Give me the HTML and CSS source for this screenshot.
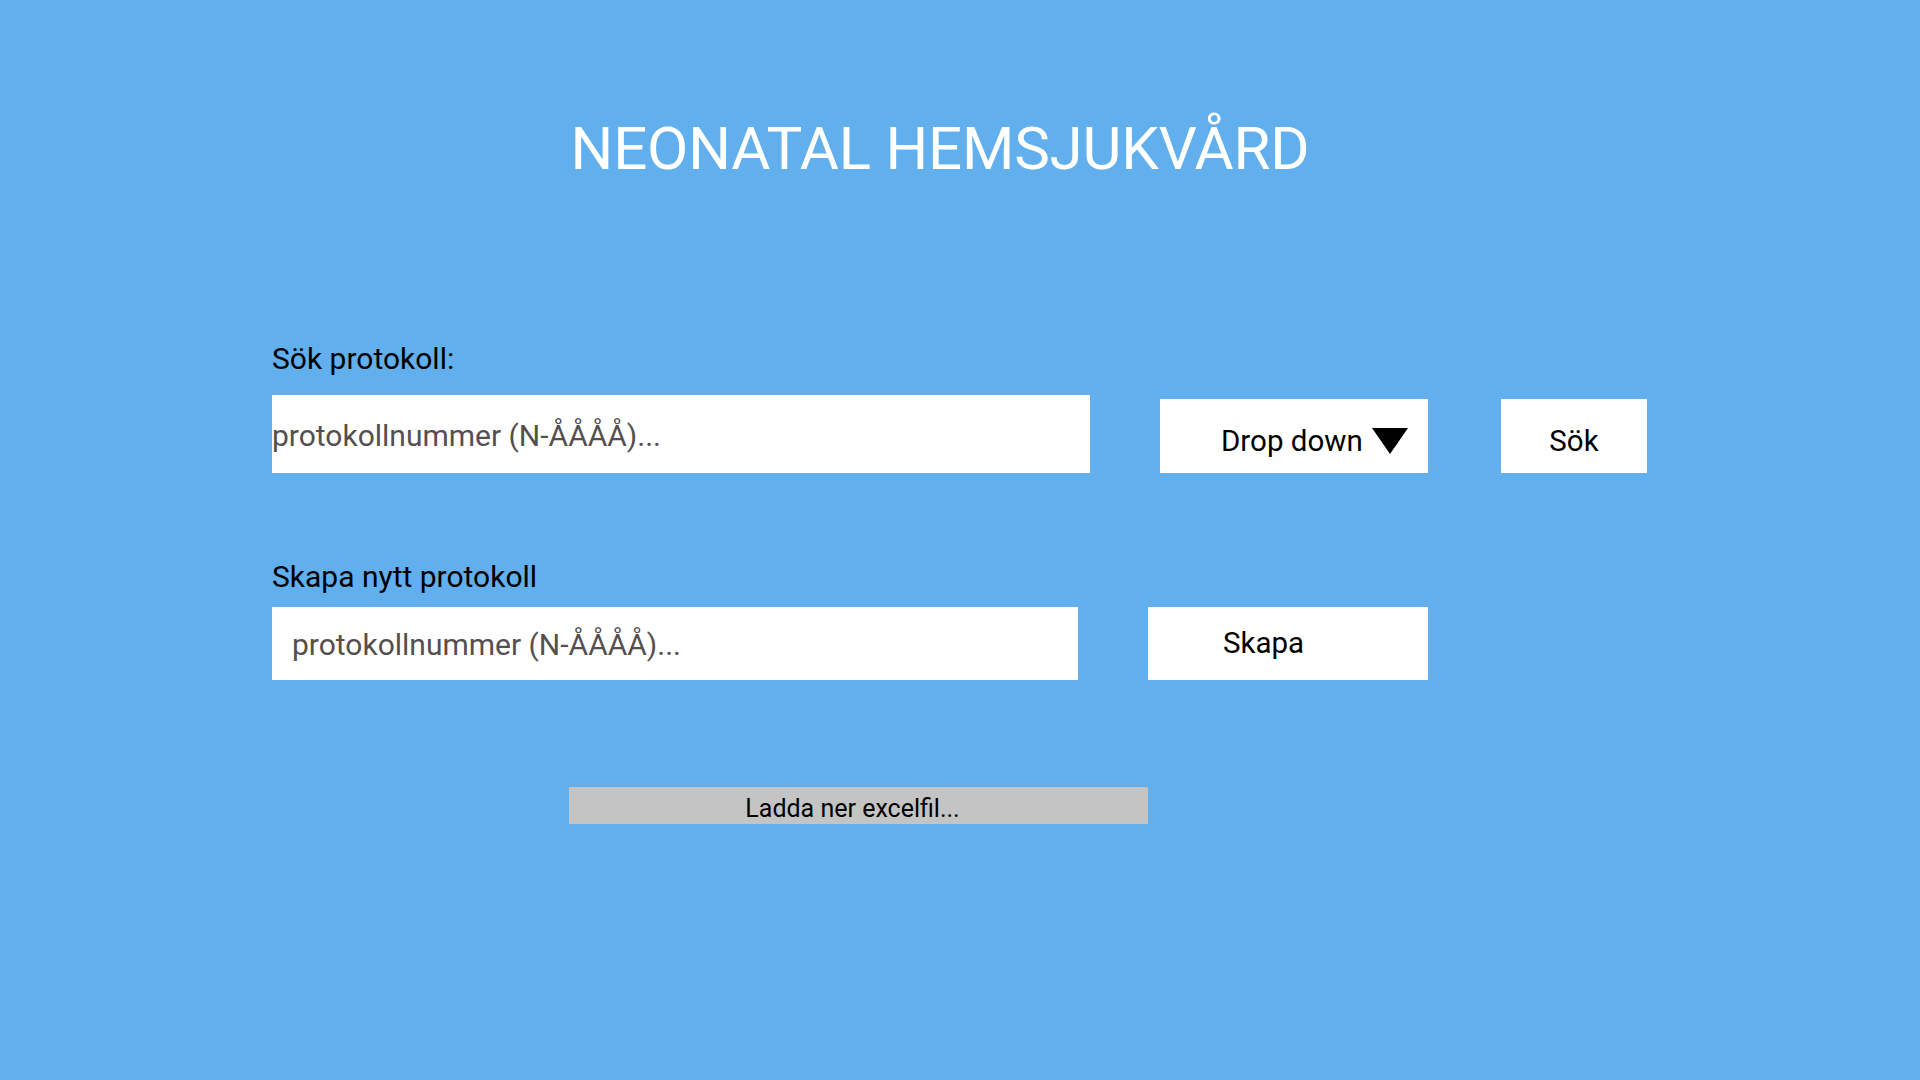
FILE: index.html
```html
<!DOCTYPE html>
<html lang="sv">
<head>
<meta charset="utf-8">
<title>Neonatal hemsjukvård</title>
<link rel="stylesheet" href="styles.css">
</head>
<body>
<main class="page">
  <h1 class="title">NEONATAL HEMSJUKVÅRD</h1>

  <section class="block search-block">
    <label class="label" for="search">Sök protokoll:</label>
    <div class="row search-row">
      <input id="search" class="field field-search" type="text" placeholder="protokollnummer (N-ÅÅÅÅ)...">
      <button class="btn btn-drop" type="button">Drop down<svg class="caret" width="36" height="26" viewBox="0 0 36 26"><polygon points="0,0 36,0 18,26" fill="#000"/></svg></button>
      <button class="btn btn-search" type="button">Sök</button>
    </div>
  </section>

  <section class="block create-block">
    <label class="label" for="create">Skapa nytt protokoll</label>
    <div class="row create-row">
      <input id="create" class="field field-create" type="text" placeholder="protokollnummer (N-ÅÅÅÅ)...">
      <button class="btn btn-create" type="button">Skapa</button>
    </div>
  </section>

  <button class="excel" type="button">Ladda ner excelfil...</button>
</main>
</body>
</html>
```
FILE: styles.css
```css
* { box-sizing: border-box; }
html, body {
  margin: 0;
  padding: 0;
  background: #62afee;
  height: 100%;
}
body {
  font-family: Roboto, "Noto Sans", sans-serif;
  color: #000;
}
.page {
  padding: 114px 0 0 272px;
  height: 1080px;
  overflow: hidden;
}
.title {
  width: 1336px;
  margin: 0;
  text-align: center;
  font-size: 60px;
  line-height: 70px;
  font-weight: 400;
  color: #fff;
  letter-spacing: -0.2px;
}
.label {
  display: block;
  font-size: 30px;
  line-height: 36px;
  color: #000;
}
.search-block { margin-top: 157px; }
.search-block .label { margin-bottom: 18px; }
.create-block { margin-top: 86px; }
.create-block .label { margin-bottom: 12px; }

.row {
  display: flex;
  align-items: flex-end;
}
.field {
  border: 0;
  outline: none;
  background: #fff;
  font-family: Roboto, sans-serif;
  font-size: 30px;
  color: #554f4f;
  margin: 0;
}
.field::placeholder { color: #554f4f; opacity: 1; }
.field-search {
  width: 818px;
  height: 78px;
  padding: 2px 0 0 0;
}
.field-create {
  width: 806px;
  height: 73px;
  padding: 2px 0 0 20px;
}
.btn {
  border: 0;
  background: #fff;
  font-family: Roboto, sans-serif;
  font-size: 29.5px;
  color: #000;
  margin: 0;
  padding: 0;
  display: flex;
  align-items: center;
}
.btn-drop {
  margin-left: 70px;
  width: 268px;
  height: 74px;
  padding-left: 61px;
  padding-top: 9px;
}
.caret { margin-left: 9px; margin-top: 0; }
.btn-search {
  margin-left: 73px;
  width: 146px;
  height: 74px;
  justify-content: center;
  padding-top: 9px;
}
.btn-create {
  margin-left: 70px;
  width: 280px;
  height: 73px;
  padding-left: 75px;
  padding-bottom: 2px;
}
.excel {
  display: block;
  margin: 107px 0 0 297px;
  width: 579px;
  height: 37px;
  border: 0;
  background: #c4c4c4;
  font-family: Roboto, sans-serif;
  font-size: 25px;
  color: #000;
  padding: 7px 12px 0 0;
  line-height: 30px;
}
```
